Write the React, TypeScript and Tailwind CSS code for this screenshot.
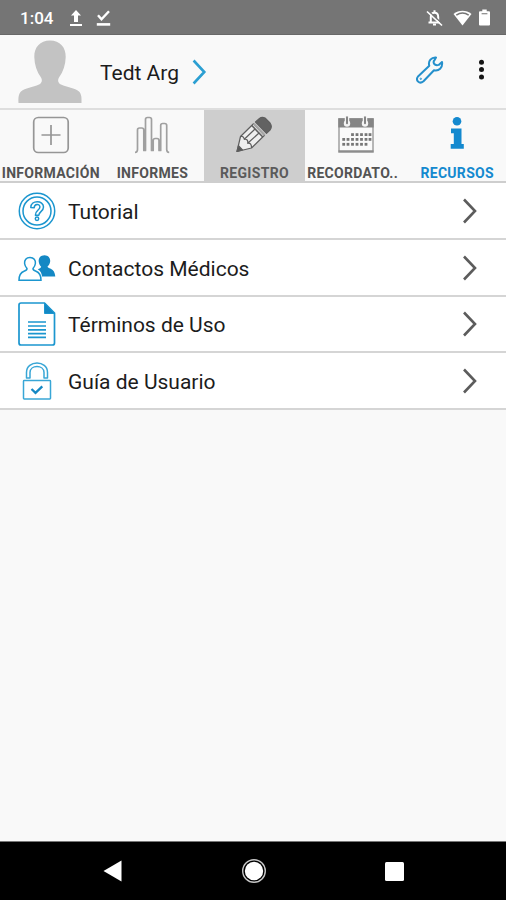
import type { ReactNode } from "react";

const BLUE = "#1b96cf";

function StatusBar() {
  return (
    <div className="flex h-[35px] items-center border-b border-[#686868] bg-[#757575] pl-5 pr-4 text-white">
      <span className="w-[48px] pt-0.5 text-[17px] font-medium leading-none">1:04</span>
      <svg width="14" height="18" viewBox="0 0 14 18" className="ml-px mt-px" fill="#fff">
        <path d="M7 1 L12 6.6 H9 V13 H5 V6.6 H2 Z" />
        <path d="M1 15h12v2H1z" />
      </svg>
      <svg width="15" height="18" viewBox="0 0 15 18" className="ml-[13px] mt-px" fill="none" stroke="#fff">
        <path d="M2 6.3 L5.5 10.3 L13 2.2" strokeWidth="2.4" />
        <path d="M.8 15.4h13.4" strokeWidth="2.6" />
      </svg>
      <svg width="17" height="18" viewBox="0 0 17 18" className="ml-auto mt-px" fill="none" stroke="#fff" strokeWidth="2">
        <path d="M4.800 13.500V8c0-3 1.500-4.300 3.700-4.300s3.700 1.300 3.700 4.300v5.500M2.500 13.500h11.500" />
        <path d="M8.500 1.200v2M7 15.600h3" strokeWidth="2" />
        <path d="M2 1.500L17 15.500" stroke="#757575" strokeWidth="1.300" />
        <path d="M1 2.500L16 16.500" strokeWidth="1.700" />
      </svg>
      <svg width="19" height="16" viewBox="0 0 19 16" className="ml-[10px] mt-px">
        <path d="M.5 4C5.800-.3 13.200-.3 18.500 4L9.500 15.500Z" fill="#fff" />
        <path d="M3.300 5.100C7 2.500 12 2.500 15.700 5.100" fill="none" stroke="#757575" strokeWidth="1.500" />
      </svg>
      <svg width="11" height="17" viewBox="0 0 11 17" className="ml-[7px] mt-px" fill="#fff">
        <path d="M3.300.5h4.400v1.700H10q1 0 1 1v12.300q0 1-1 1H1q-1 0-1-1V3.200q0-1 1-1h2.300z" />
        <path d="M2.600 4.700h5.800" stroke="#888" strokeWidth="1.200" />
      </svg>
    </div>
  );
}

function Header() {
  return (
    <div className="flex h-[75px] border-b-2 border-[#dedede] bg-[#f9f9f9] pl-[18px] pr-[21.500px]">
      <svg width="64" height="63" viewBox="0 0 64 63" className="mt-[5px]" fill="#c3c3c3">
        <path d="M32 .5C22 .5 16 7.500 16.300 17c.2 8 2.500 14.500 6.700 20.500 1.600 2.800 1 5.500-2 7C15 47.300 7 47.800 3 51.500.3 54.300.3 58.500.5 63h63c.2-4.500.2-8.700-2.500-11.500-4-3.700-12-4.200-18-7-3-1.500-3.600-4.200-2-7 4.200-6 6.500-12.500 6.700-20.500C48 7.500 42 .5 32 .5Z" />
      </svg>
      <div className="ml-[18px] mt-[25px] w-[80px] whitespace-nowrap text-[21px] leading-[26px] text-[#1c1c1c]">
        Tedt Arg
      </div>
      <svg width="15" height="26" viewBox="0 0 15 26" className="ml-3 mt-6" fill="none" stroke="#2b9fd2" strokeWidth="2.600">
        <path d="M1.600 1.500L12.300 13L1.600 24.500" />
      </svg>
      <svg width="28" height="28" viewBox="0 0 28 28" className="ml-auto mt-[21px]" fill="none" stroke="#2590cc" strokeWidth="2" strokeLinejoin="round">
        <path d="M20 1.500C15.500 1 11.800 5 13.300 9.700L2 20.500C-.8 24.200 3.300 28.800 7.500 25.300L18 14.200C22.700 15.300 27 12 26 6L22.700 8.900Q19.500 9.800 18 7.600Q17 5.500 18.600 4Z" />
        <circle cx="4.800" cy="22.800" r=".7" strokeWidth="1" />
      </svg>
      <svg width="7" height="22" viewBox="0 0 7 22" className="ml-[34px] mt-6" fill="#151515">
        <circle cx="3.500" cy="3.300" r="2.500" />
        <circle cx="3.500" cy="10.600" r="2.500" />
        <circle cx="3.500" cy="18" r="2.500" />
      </svg>
    </div>
  );
}

function PlusIcon() {
  return (
    <svg width="38" height="38" viewBox="0 0 38 38" fill="none" stroke="#969696" strokeWidth="1.700">
      <rect x="1.700" y="1.500" width="34.500" height="35" rx="4.500" />
      <path d="M9.500 19h19M19 9v20" />
    </svg>
  );
}

function ChartIcon() {
  return (
    <svg width="38" height="38" viewBox="0 0 38 38" fill="none" stroke="#a0a0a0" strokeWidth="1.700" strokeLinejoin="round">
      <path d="M2 36.500q2.500-.3 2.500-3V14q0-2 2-2h2.300q2 0 2 2v20.500h1.700V3.500q0-2 2-2h2q2 0 2 2v31h1.700V24.500q0-2 2-2h1.800q2 0 2 2v10h1.700V9.500q0-2 2-2h2q2 0 2 2v24q0 2.700 2.500 3" />
    </svg>
  );
}

function PencilIcon() {
  return (
    <svg width="38" height="38" viewBox="0 0 38 38" fill="none" stroke="#5e5e5e" strokeWidth="1.200" strokeLinejoin="round">
      <path d="M2 35.500L5.500 20.500L18.500 7.800L29.500 19.300L16.500 32Z" fill="#eee" />
      <path d="M20.500 6L24.500 2.400Q27 .5 30 2L35 7Q37.500 10.500 35.200 13.700L31.500 17.300Z" fill="#626262" />
      <path d="M18.700 7.700L29.700 19.200" stroke="#a5a5a5" strokeWidth="2.200" />
      <path d="M16.800 9.500L27.800 21" strokeWidth="1.600" />
      <path d="M5.500 20.500q3-.8 3.800 2.800 4-.6 3.400 4 4-.7 3.800 4.700M9.300 23.300L20.300 12.800M12.700 27.300L24.300 16.800" />
      <path d="M2 35.500l1.500-5.800 4 4.300z" fill="#5a5a5a" />
    </svg>
  );
}

const calendarDots = [
  [14.5, 17.800], [19, 17.800], [23.500, 17.800], [28, 17.800], [32, 17.800],
  [5.700, 22.600], [10, 22.600], [14.500, 22.600], [19, 22.600], [23.500, 22.600], [28, 22.600], [32, 22.600],
  [5.700, 27.500], [10, 27.500], [14.500, 27.500], [19, 27.500], [23.500, 27.500], [28, 27.500],
];

function CalendarIcon() {
  return (
    <svg width="38" height="38" viewBox="0 0 38 38">
      <rect x="2" y="3" width="34" height="33" fill="#fafafa" stroke="#a0a0a0" strokeWidth="1.500" />
      <path d="M1.300 2.300h35.400v9.200H1.300z" fill="#858585" />
      <path d="M1.500 35.300h35" stroke="#8d8d8d" strokeWidth="2" />
      {[10, 28].map((x) => (
        <g key={x}>
          <circle cx={x} cy="7.500" r="3.200" fill="#f4f4f4" />
          <path d={`M${x} 1v6.500`} stroke="#f4f4f4" strokeWidth="4.500" strokeLinecap="round" />
          <path d={`M${x} 1.300v6`} stroke="#858585" strokeWidth="2" strokeLinecap="round" />
        </g>
      ))}
      {calendarDots.map(([x, y]) => (
        <rect key={`${x}-${y}`} x={x - 0.4} y={y - 0.6} width="2.800" height="2.800" fill="#777" />
      ))}
    </svg>
  );
}

function InfoIcon() {
  return (
    <svg width="38" height="38" viewBox="0 0 38 38" fill="#1489cf">
      <circle cx="19" cy="5.300" r="4.300" />
      <path d="M13 12.500h10.500V28h2.300v4.700H12.700V28h3.100V17.300H13z" />
    </svg>
  );
}

const tabs: { label: string; icon: ReactNode; active?: boolean; color: string }[] = [
  { label: "INFORMACIÓN", icon: <PlusIcon />, color: "text-[#535353]" },
  { label: "INFORMES", icon: <ChartIcon />, color: "text-[#535353]" },
  { label: "REGISTRO", icon: <PencilIcon />, active: true, color: "text-[#5b5b5b]" },
  { label: "RECORDATO..", icon: <CalendarIcon />, color: "mr-1.5 text-[#535353]" },
  { label: "RECURSOS", icon: <InfoIcon />, color: "text-[#1489cf]" },
];

function TabBar() {
  return (
    <div className="h-[73px] border-b-2 border-[#cecece] bg-[#f9f9f9]">
      <div className="grid h-full w-[508px] grid-cols-5">
        {tabs.map((tab) => (
          <div
            key={tab.label}
            className={`flex min-w-0 flex-col items-center pt-1.5 ${tab.active ? "ml-px bg-[#cecece]" : ""}`}
          >
            {tab.icon}
            <span
              className={`mt-[11px] whitespace-nowrap text-[14px] font-bold leading-[16px] tracking-[0.300px] ${tab.color}`}
            >
              {tab.label}
            </span>
          </div>
        ))}
      </div>
    </div>
  );
}

function HelpIcon() {
  return (
    <svg width="38" height="38" viewBox="0 0 38 38" className="mt-px" fill="none" stroke={BLUE} strokeWidth="1.500">
      <circle cx="19" cy="19" r="17.700" />
      <circle cx="19" cy="19" r="14" />
      <path d="M12.800 15.500C13 7.800 25.500 8 25.500 15c0 4.500-4.700 4.700-4.700 8.300h-3.400c0-5.300 4.500-5 4.500-8.300 0-3.700-5.700-3.400-5.700.7z" strokeLinejoin="round" />
      <circle cx="19" cy="26.700" r="1.700" />
    </svg>
  );
}

function ContactsIcon() {
  return (
    <svg width="38" height="38" viewBox="0 0 38 38" className="mt-0.5">
      <path
        d="M26.500 6.200c-3.900 0-6.100 2.900-5.800 6.300.2 2.300 1.200 4 2.500 5.300-.3 1.200-1.700 1.700-3.400 2.400 3 2 4 4.500 4.200 7.300h13.300c-.5-4-1.700-6.500-4.500-7.700-2-.8-3-1-3.300-2.200 1.500-1.500 2.500-3.200 2.700-5.300.2-3.300-2-6.100-5.700-6.100Z"
        fill="#1488c4"
      />
      <path
        d="M12 8.500c-3.900 0-5.700 2.700-5.400 6 .2 2 1.100 3.500 2.400 5 .2 1.300-1 2-3 2.700-3.300 1.200-5 3.500-5 9h22c0-5.500-1.700-7.800-5-9-2-.7-3.200-1.400-3-2.700 1.300-1.500 2.200-3 2.400-5C17.700 11.200 15.900 8.500 12 8.500Z"
        fill="#fff"
        stroke={BLUE}
        strokeWidth="1.500"
      />
    </svg>
  );
}

function DocumentIcon() {
  return (
    <svg width="38" height="44" viewBox="0 0 38 44" fill="none" stroke={BLUE} strokeWidth="1.700">
      <path d="M3 1H26.500L36.500 11V41q0 2-2 2H3q-2 0-2-2V3q0-2 2-2Z" />
      <path d="M26.500 1V11.500H36.500Z" fill="#1488c4" strokeWidth="1" />
      <path d="M10 20h18M10 24h18M10 27.800h18M10 31.600h18M10 35.300h18" strokeWidth="1.700" />
    </svg>
  );
}

function LockIcon() {
  return (
    <svg width="38" height="38" viewBox="0 0 38 38" fill="none" stroke="#38a6d6" strokeWidth="1.500">
      <rect x="5.500" y="18.500" width="27" height="18.500" rx=".7" />
      <path d="M8.500 16V10.500C8.500-2.200 29.500-2.200 29.500 10.500V16H26V10.500C26 2.500 12 2.500 12 10.500V16Z" strokeLinejoin="round" />
      <path d="M13.500 27l4 3.800L24.300 24.300" stroke="#1488c4" strokeWidth="2.300" />
    </svg>
  );
}

const resources = [
  { label: "Tutorial", icon: <HelpIcon /> },
  { label: "Contactos Médicos", icon: <ContactsIcon /> },
  { label: "Términos de Uso", icon: <DocumentIcon /> },
  { label: "Guía de Usuario", icon: <LockIcon /> },
];

function ResourceRow({ label, icon }: { label: string; icon: ReactNode }) {
  return (
    <li className="flex h-[56.750px] items-center border-b-2 border-[#d5d5d5] bg-white pl-[18px] pr-[28px]">
      {icon}
      <span className="ml-3 whitespace-nowrap pt-[3px] text-[21px] leading-[26px] text-[#1c1c1c]">{label}</span>
      <svg width="16" height="26" viewBox="0 0 16 26" className="ml-auto mt-px" fill="none" stroke="#5c5c5c" strokeWidth="2.600">
        <path d="M2 1.500L13 13L2 24.500" />
      </svg>
    </li>
  );
}

function NavBar() {
  return (
    <div className="flex h-[59px] items-center justify-between border-t border-[#777] bg-black pl-[103px] pr-[102px]">
      <svg width="20" height="22" viewBox="0 0 20 22" fill="#fff">
        <path d="M.5 11L18.500.500V21.500Z" />
      </svg>
      <svg width="26" height="26" viewBox="0 0 26 26">
        <circle cx="13" cy="13" r="11.300" fill="none" stroke="#c8c8c8" strokeWidth="1.400" />
        <circle cx="13" cy="13" r="9.200" fill="#fff" />
      </svg>
      <div className="h-[19px] w-[19px] rounded-[1.500px] bg-white" />
    </div>
  );
}

export default function App() {
  return (
    <div className="flex h-[900px] w-[506px] flex-col overflow-hidden bg-[#f9f9f9] font-[Roboto,'Liberation_Sans',sans-serif]">
      <StatusBar />
      <Header />
      <TabBar />
      <ul className="flex-1">
        {resources.map((item) => (
          <ResourceRow key={item.label} {...item} />
        ))}
      </ul>
      <NavBar />
    </div>
  );
}
